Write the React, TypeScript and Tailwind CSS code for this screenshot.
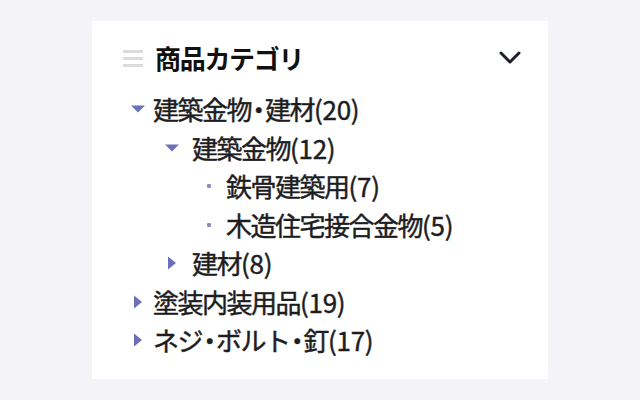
import React from "react";

type Node = { label: string; count: string; level: number; kind: "open" | "closed" | "leaf" };

const rows: Node[] = [
  { label: "建築金物・建材", count: "(20)", level: 0, kind: "open" },
  { label: "建築金物", count: "(12)", level: 1, kind: "open" },
  { label: "鉄骨建築用", count: "(7)", level: 2, kind: "leaf" },
  { label: "木造住宅接合金物", count: "(5)", level: 2, kind: "leaf" },
  { label: "建材", count: "(8)", level: 1, kind: "closed" },
  { label: "塗装内装用品", count: "(19)", level: 0, kind: "closed" },
  { label: "ネジ・ボルト・釘", count: "(17)", level: 0, kind: "closed" },
];

function Label({ text }: { text: string }) {
  const parts = text.split("・");
  return (
    <>
      {parts.map((p, i) => (
        <React.Fragment key={i}>
          {i > 0 && (
            <span className="inline-flex justify-center w-[14px]">
              <span>・</span>
            </span>
          )}
          {p}
        </React.Fragment>
      ))}
    </>
  );
}

function Marker({ kind }: { kind: Node["kind"] }) {
  if (kind === "open")
    return (
      <svg width="16" height="8" viewBox="0 0 16 8">
        <polygon points="1,0.5 15,0.5 8,7.5" fill="#6c70b8" />
      </svg>
    );
  if (kind === "closed")
    return (
      <svg width="16" height="14" viewBox="0 0 16 14">
        <polygon points="4,0.5 12,7 4,13.5" fill="#6c70b8" />
      </svg>
    );
  return <span className="block w-[4px] h-[4px] rounded-[1px] bg-[#8b8ec6]" />;
}

function Row({ node }: { node: Node }) {
  const pad = node.level === 0 ? "pl-0" : node.level === 1 ? "pl-[34px]" : "pl-[77px]";
  const slot = node.level === 0 ? "w-[23px]" : node.level === 1 ? "w-[28px]" : "w-[19px]";
  return (
    <li className={`flex items-center h-[38.5px] ${pad}`}>
      <span className={`flex items-center ${slot} shrink-0`}>
        <Marker kind={node.kind} />
      </span>
      <span className="text-[26px] leading-none font-normal text-[#1d1d1f] whitespace-nowrap [-webkit-text-stroke:0.45px_#1d1d1f]">
        <span className="tracking-[-1.5px]">
          <Label text={node.label} />
        </span>
        <span className="tracking-[-0.3px]">{node.count}</span>
      </span>
    </li>
  );
}

export default function App() {
  return (
    <div
      className="w-[640px] h-[400px] bg-[#f3f3f8] flex items-center justify-center"
      style={{ fontFamily: '"Noto Sans CJK JP", "Noto Sans", sans-serif' }}
    >
      <div className="w-[456px] h-[358px] bg-white pt-[25px] pl-[31px] pr-[27px]">
        <div className="flex items-center justify-between h-[24px]">
          <div className="flex items-center">
            <svg width="20" height="18" viewBox="0 0 20 18" className="mr-[12px]">
              <rect x="0" y="1" width="20" height="3" fill="#dcdcdc" />
              <rect x="0" y="8" width="20" height="3" fill="#dcdcdc" />
              <rect x="0" y="15" width="20" height="3" fill="#dcdcdc" />
            </svg>
            <h2 className="text-[26px] leading-none font-bold tracking-[-1.3px] text-[#111]">商品カテゴリ</h2>
          </div>
          <svg width="22" height="14" viewBox="0 0 22 14">
            <polyline
              points="2,2 11,11 20,2"
              fill="none"
              stroke="#1c1f2e"
              strokeWidth="3"
              strokeLinecap="round"
              strokeLinejoin="round"
            />
          </svg>
        </div>
        <ul className="mt-[20px] pl-[7px]">
          {rows.map((r, i) => (
            <Row key={i} node={r} />
          ))}
        </ul>
      </div>
    </div>
  );
}
